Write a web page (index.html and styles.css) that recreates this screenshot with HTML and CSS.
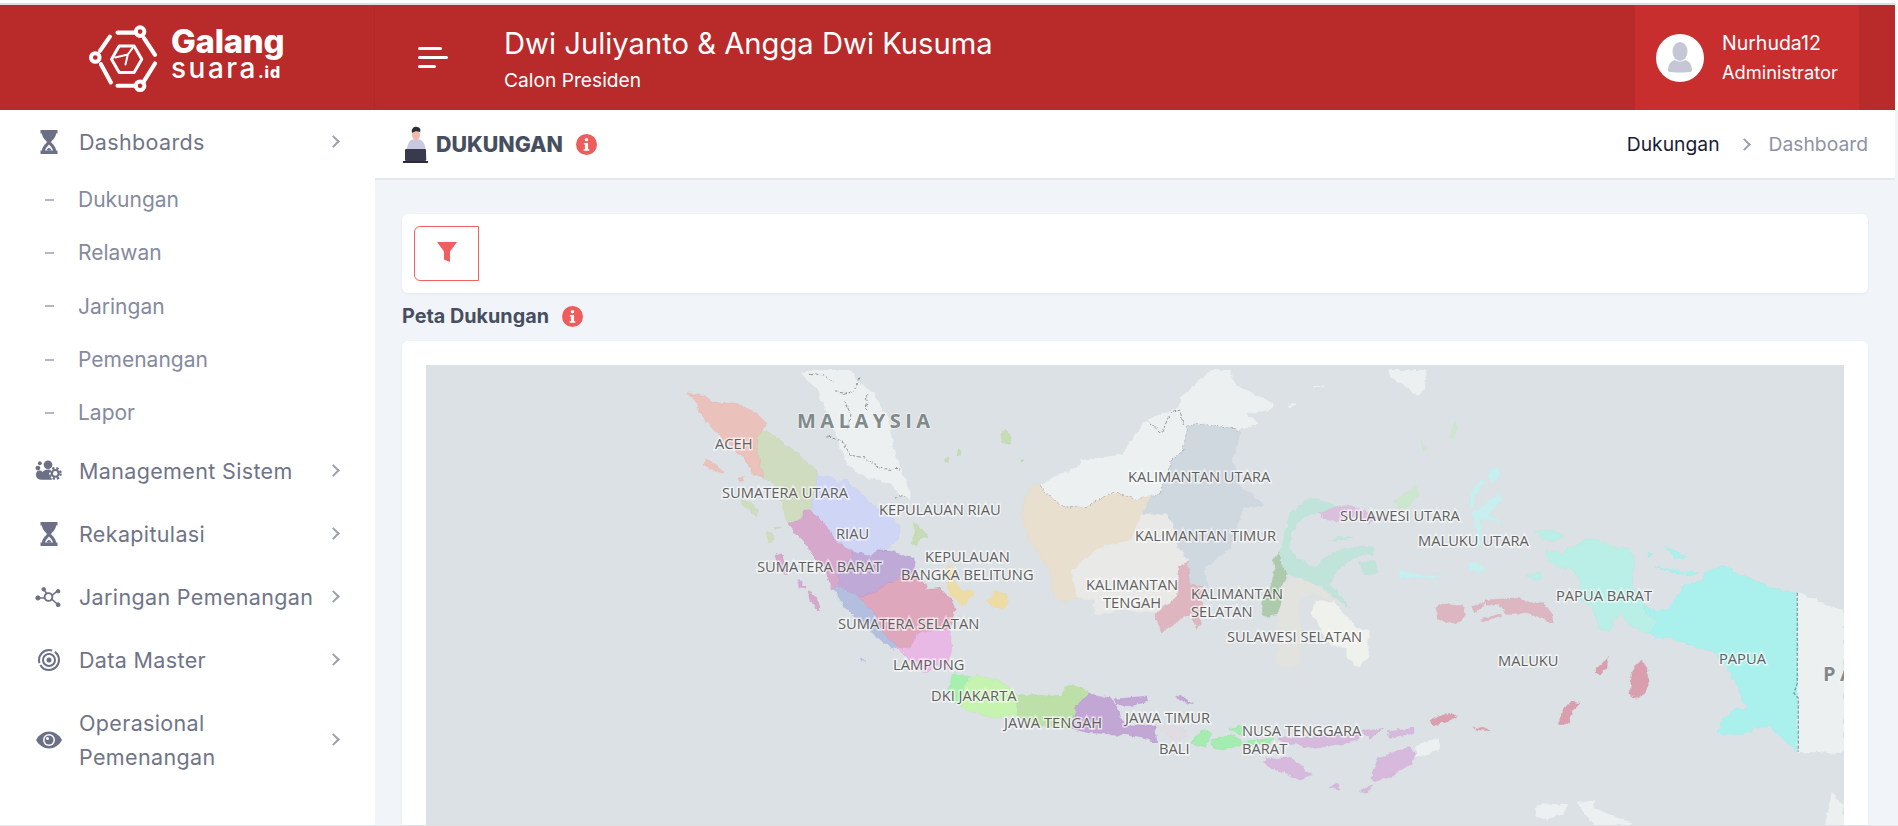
FILE: index.html
```html
<!DOCTYPE html>
<html lang="en">
<head>
    <meta charset="UTF-8">
    <meta name="viewport" content="width=device-width, initial-scale=1.0">
    <title>Dukungan | Galang Suara</title>
    <link rel="stylesheet" href="styles.css">
</head>
<body>
<div class="page">
    <header class="topbar">
        <div class="brand">
            <svg class="brand-logo" viewBox="50 40 220 220" fill="none" stroke="#fff" stroke-width="12.500" stroke-linecap="round" stroke-linejoin="round">
                <path d="M145 75h55M225 92l33 50M258 168l-36 58M200 235h-55M125 225L95 170M92 130l30-43"/>
                <circle cx="213" cy="72" r="13" stroke-width="12"/>
                <circle cx="213" cy="235" r="13" stroke-width="12"/>
                <circle cx="78" cy="150" r="13" stroke-width="12"/>
                <path d="M150 115h45l23 40-23 40h-45l-23-40z" stroke-width="9"/>
                <path d="M138 150l38-9 19-26M176 141l-7 30" stroke-width="6"/>
            </svg>
            <div class="brand-text">
                <span class="brand-top">Galang</span>
                <span class="brand-bottom">suara<b>.id</b></span>
            </div>
        </div>
        <div class="burger"><i class="b1"></i><i class="b2"></i><i class="b3"></i></div>
        <div class="candidate">
            <div class="candidate-name">Dwi Juliyanto &amp; Angga Dwi Kusuma</div>
            <div class="candidate-role">Calon Presiden</div>
        </div>
        <div class="user">
            <div class="avatar">
                <svg viewBox="0 0 48 48" width="48" height="48">
                    <ellipse cx="24" cy="17.500" rx="7.500" ry="9.500" fill="#c5c6d6"/>
                    <path d="M12 37c0-7 3-10 7-11 3 2 7 2 10 0 4 1 7 4 7 11 0 2-24 2-24 0z" fill="#c5c6d6"/>
                </svg>
            </div>
            <div class="user-info">
                <div class="user-name">Nurhuda12</div>
                <div class="user-role">Administrator</div>
            </div>
        </div>
    </header>

    <div class="layout">
        <nav class="sidebar">
            <a class="menu-item">
                <span class="menu-icon"><svg width="18" height="24" viewBox="0 0 18 24"><use href="#ic-hourglass"/></svg></span>
                <span class="menu-label">Dashboards</span>
                <span class="chev"></span>
            </a>
            <a class="sub-item"><i></i>Dukungan</a>
            <a class="sub-item"><i></i>Relawan</a>
            <a class="sub-item"><i></i>Jaringan</a>
            <a class="sub-item"><i></i>Pemenangan</a>
            <a class="sub-item"><i></i>Lapor</a>
            <a class="menu-item">
                <span class="menu-icon">
                    <svg width="28" height="21" viewBox="0 0 28 21" fill="#6c7086">
                        <circle cx="13.500" cy="4.500" r="4.500"/><circle cx="5" cy="3" r="2"/><circle cx="3" cy="8" r="2.500"/>
                        <path d="M1 15c0-3 1.500-4.500 4-4.500 1 0 2 .5 3 1.500 1-1.500 3-2.500 5.500-2.500 2 0 3 .5 4 1.500v9H6c-3 0-5-2-5-5z"/>
                        <circle cx="21" cy="13.500" r="6.500" fill="#fff"/>
                        <circle cx="21" cy="13.500" r="5.500" fill="none" stroke="#6c7086" stroke-width="2.500" stroke-dasharray="2.400 2"/>
                        <circle cx="21" cy="13.500" r="3.500" fill="none" stroke="#6c7086" stroke-width="2.200"/>
                    </svg>
                </span>
                <span class="menu-label">Management Sistem</span>
                <span class="chev"></span>
            </a>
            <a class="menu-item">
                <span class="menu-icon"><svg width="18" height="24" viewBox="0 0 18 24"><use href="#ic-hourglass"/></svg></span>
                <span class="menu-label">Rekapitulasi</span>
                <span class="chev"></span>
            </a>
            <a class="menu-item">
                <span class="menu-icon">
                    <svg width="28" height="22" viewBox="0 0 28 22" fill="#6c7086" stroke="#6c7086">
                        <path d="M3 12h9M9 3l5 7M17 13l7 6M18 9l5-4" stroke-width="1.600" fill="none"/>
                        <circle cx="14" cy="11" r="4" fill="#fff" stroke-width="2"/>
                        <circle cx="3" cy="12" r="2.200"/><circle cx="9" cy="3" r="1.800"/><circle cx="24" cy="19" r="2"/><circle cx="24" cy="5" r="1.800"/>
                    </svg>
                </span>
                <span class="menu-label">Jaringan Pemenangan</span>
                <span class="chev"></span>
            </a>
            <a class="menu-item">
                <span class="menu-icon">
                    <svg width="24" height="24" viewBox="0 0 24 24" fill="none" stroke="#6c7086">
                        <circle cx="12" cy="12" r="10" stroke-width="2" stroke-dasharray="26 2 22 3"/>
                        <circle cx="12" cy="12" r="6" stroke-width="2"/>
                        <circle cx="12" cy="12" r="2.500" fill="#6c7086" stroke="none"/>
                    </svg>
                </span>
                <span class="menu-label">Data Master</span>
                <span class="chev"></span>
            </a>
            <a class="menu-item">
                <span class="menu-icon">
                    <svg width="26" height="18" viewBox="0 0 26 18">
                        <path d="M0 9C3 3.500 8 0.500 13 0.500S23 3.500 26 9c-3 5.500-8 8.500-13 8.500S3 14.500 0 9z" fill="#6c7086"/>
                        <circle cx="13" cy="9" r="6" fill="#fff"/>
                        <circle cx="13" cy="9" r="4.500" fill="#6c7086"/>
                        <circle cx="11.500" cy="7.500" r="1.500" fill="#fff"/>
                    </svg>
                </span>
                <span class="menu-label">Operasional Pemenangan</span>
                <span class="chev"></span>
            </a>
        </nav>

        <main class="main">
            <div class="subheader">
                <div class="page-title">
                    <svg width="28" height="37" viewBox="0 0 28 37">
                        <path d="M4 34c0-9 1-17 5-20 2-1 8-1 10 0 5 3 5 12 6 20z" fill="#c9c8e0"/>
                        <ellipse cx="14" cy="9" rx="4" ry="5" fill="#f3b9a8"/>
                        <path d="M10 7c-1-4 2-7 5-6 3 0 4 3 3 5-3-1-5-1-8 1z" fill="#2b2b3a"/>
                        <rect x="3" y="23" width="21" height="12" rx="1" fill="#3a3a4f"/>
                        <rect x="1" y="35" width="25" height="2" fill="#2b2b3a"/>
                    </svg>
                    <h1>DUKUNGAN</h1>
                    <svg class="info" viewBox="0 0 20 20"><use href="#ic-info"/></svg>
                </div>
                <div class="crumbs">
                    <span class="crumb-on">Dukungan</span>
                    <span class="chev"></span>
                    <span class="crumb-off">Dashboard</span>
                </div>
            </div>

            <div class="content">
                <div class="card filter-card">
                    <button class="filter-btn" type="button">
                        <svg width="20" height="20" viewBox="0 0 20 20"><path d="M0 0h20l-7 9.500V20l-6-2.500V9.500z" fill="#f05f5f"/></svg>
                    </button>
                </div>
                <div class="section-title">
                    <h2>Peta Dukungan</h2>
                    <svg class="info" viewBox="0 0 20 20"><use href="#ic-info"/></svg>
                </div>
                <div class="card map-card">
                    <div class="map">
                        <svg class="map-svg" viewBox="426 365 1418 461" preserveAspectRatio="xMinYMin slice">
                            <defs>
                                <filter id="coast" x="-5%" y="-5%" width="110%" height="110%">
                                    <feTurbulence type="fractalNoise" baseFrequency="0.05" numOctaves="3" seed="7"/>
                                    <feDisplacementMap in="SourceGraphic" scale="16" xChannelSelector="R" yChannelSelector="G"/>
                                    <feGaussianBlur stdDeviation="0.600"/>
                                </filter>
                            </defs>
                            <!-- Sumatra, coordinates taken at 3x -->
                            <g filter="url(#coast)" transform="translate(660 370) scale(.3333)">
                                <path class="land" d="M420 10l30-10h120l30 40 40 30 50 80 10 80 40 110 15 55-35-25-30-30-70-15-60-45-20-50-30-80-40-90z"/>
                                <path class="border" d="M450 10l40 5 30 20M600 25l-15 35-30 10-30-5M620 70l0 50M550 90l20 40-5 50M500 200l50 15 20 40 50 10 40 30 60 5M705 385c10-10 30-10 40 5"/>
                                <path class="p-aceh" d="M95 75l35 0 35 25h65l60 30 30 30-15 18-15 27 5 45 15 70-30-5-30-55-40-35-40-35-40-45z"/>
                                <path class="p-aceh" d="M135 270l15 2 40 33-5 7-35-17-17-10zM85 65l12 5 2 8-12-4zM235 325l15-5 3 12-15 2z"/>
                                <path class="p-sumut" d="M305 178l35 17 60 45 50 45 18 15 2 40-15 55v25h-23v20l-47 22-15-42-8-35-22-45-30-18-15-72-5-45z"/>
                                <path class="p-sumut" d="M245 385l30 15 20 20-5 20-20-15-22-25zM325 480l15 10v20l-12 12-8-27zM340 470l22 2-12 4z"/>
                                <path class="p-riau" d="M468 315l42 5 20 15 35-5 10 25 25 10 30 35 50 30 40 40-5 40-35 25-25 5-25 20-50-15-50-30-30-45-45-45v-30l15-55z"/>
                                <path class="p-sumbar" d="M385 462l47-22v-20l28 5 40 45 30 45 50 30-2 15-48 50 10 40-25 10-15-50-60-80z"/>
                                <path class="p-sumbar" d="M345 555l20-7 10 42 15 20h-20l-20-30zM410 630l15 5 10 20-15-5zM445 665l20 15 15 30-5 12-25-32z"/>
                                <path class="p-jambi" d="M580 545l50 15 25-20h35l40 18 35 7 5 45-50 5-25 25-35 15-20 15-45 10-55-30-10-40 48-50z"/>
                                <path class="p-sumsel" d="M595 680l45-10 20-15 20-15h15l25-25h50l30 30-10 15 50-5 30 30 15 30-15 65-70 10-35 10-10 40-40-5-45-40-35-70-25-20z"/>
                                <path class="p-bengkulu" d="M520 655l20-5 55 30 15 20 25 20 35 70 45 40-15 8-40-28-60-50-50-55zM600 865l15 5 2 6-15-5z"/>
                                <path class="p-lampung" d="M710 830l45 5 10-40 35-10 70-10 5 65-15 60-30-15-30 20-30-5-30-40z"/>
                                <path class="p-babel" d="M865 590l20 10-5 25 15 30 40 10 10 5-20 20-10 15-25-10-20-25-10-40zM1000 665l40 7 5 23-15 20h-30l-10-20-12-5 17-10z"/>
                                <path class="p-kepri" d="M760 455l15 15 30 30-25 5-10 25-18-10 13-30zM1035 178l20 17-5 23-20 4-8-27zM892 237l8-2 2 20-8 3zM855 262l12 4-4 12-8-4zM1080 265l8 6-6 6z"/>
                            </g>
                            <!-- Kalimantan, Sulawesi -->
                            <g filter="url(#coast)" transform="translate(1000 370) scale(.3333)">
                                <path class="land" d="M120 345l120-60 5-15 115-15 80-105 100-40V85l50-45 40-40h60l20 45 110 55-10 20-70 10 35 30-55 20-100-15h-55l-15 75-30 25-30 80-10 30-70 15-70-25-80 45-70 5-60-50zM1165 0h115l-5 55-20 20-45-30-40-25zM860 110l25-12 8 6-25 10zM940 45h30v5h-30z"/>
                                <path class="border" d="M440 150l45 40 25-60 30-10 10 45M120 345l10 20 60 50 70-5 80-45 70 25 70-15M480 375l10-30 30-80 30-25 15-75h55l100 15"/>
                                <path class="p-kalbar" d="M105 340l15 5 10 20 60 50 70-5 80-45 70 25 40-12-25 52-30 80-95 20-85 70 15 80-40 20-30-20-10-80-20-30-45-60-20-90 15-50z"/>
                                <path class="p-kalteng" d="M215 600l85-70 95-20 30-80h75l20 30 15 70 30 45-30 15-5 90-70 50-90-10-85 15-5-45-50-10z"/>
                                <path class="p-kalsel" d="M535 590l30-15 5 65 40 10-10 90 5 20-15 15-20-45-85 55-23-50 68-55z"/>
                                <path class="p-kaltim" d="M565 165h55l100 15-5 35-20 55 25 80 75 55-65 5-40 120-80 70 15 50-55-10-5-65-30-45-15-70-20-30h-70l20-52 30-3 10-30 30-80 30-25z"/>
                                <path class="p-sulteng" d="M870 430l25-20 35-25 45 10 35 13-50 22h-30l-40 30-15 30-5 50 25 30 55 20 30-30 40-20 65-15 35 5v25h-35l-35 15-40 35-20 35 60 75-50-35-40-30-60-25-40-15-20-65 15-55zM1075 575h50l10 35-40 5zM990 510l30-10 40 5-30 8z"/>
                                <path class="p-gorontalo" d="M958 430l62-22h40l70 32-20 18-50-18-50 12-40-7z"/>
                                <path class="p-sulut" d="M1185 390l60-40 10 25-30 35-35 5zM1350 200l15-45 7 25-12 30zM1265 210l15 25-10 5z"/>
                                <path class="p-sulbar" d="M838 545l7 45 17 20-22 50 5 40-15 35-40 5-5-40 25-40 15-60-5-30z"/>
                                <path class="p-sulsel" d="M850 645l30-20h25l55 30 40 25-5 15-50-25-50 20 10 110-5 85-50 10-25-15 15-80-10-60 15-40zM905 900l7 50-7-2z"/>
                                <path class="p-sultra" d="M945 690l55 5 50 55 25 25 30 5v80l-30 35-35-35v-25l-50-10-30-55-25-35z"/>
                            </g>
                            <!-- Maluku, Papua -->
                            <g filter="url(#coast)" transform="translate(1400 450) scale(.3333)">
                                <path class="land" d="M1192 430l48 15 50 25 42 10v425l-32 10-30-10-78 3zM405 1075l25-15 70 5-5 25-55 20-30-10zM530 1060l50-10 5 25 65 25 50 25H585zM1275 1125l20-100 37 45v55z"/>
                                <path class="p-malut" d="M245 85l10 10-30 45v30h-20l10-45zM295 130l10 15-15 25-25 20 45 35-40-15h-30l5 80h-10l-10-70-10-30 45-30zM270 60l25-8 5 23-20 20-15-15zM205 340l20-5 35 23-20 9-30-5zM0 362l60 13h80l-40 7 10 33-15-30-55-5-40 5z"/>
                                <path class="p-pabar" d="M440 300l40 10 20-15 70-27 40 7 40 20h40l15 43-10 45 5 30 35 45v35l40 25-25 33-50-18-40-40-20 20-10 35-30-10-25-70-35-15 5-45-20-45-55-15-25-20zM405 245l45-5 40 15-20 15h-40zM378 378l42-13 10 20-25 7z"/>
                                <path class="p-papua" d="M910 370l55-23 75 33 70 32 80 18 2 475-27-25-55-50-50 5-20 15-90 3 20-43 30-30 40-5-25-60-30-55-35-50-70-20-60-25h-50l-20-17 25-33-40-25v-25l35 20 30-5 55-75 60-15zM785 288l30 7 20 15 25 10-35 7-15-22zM765 348l65 14 65 6-25 10-55-13zM745 310l12 5-12 7z"/>
                                <path class="p-maluku" d="M258 450l72-5 25-3 35 16h40l25 32 5 30-60-25-30-5h-50l-20-25-42 0zM105 475l20-12h40l25 8 10 19-20 25-30 5-35-15zM215 470l40-15-10 15-20 20zM245 510l35-15 25 2-25 11-30 9z"/>
                                <path class="p-aru" d="M725 630l15 20 5 50-10 30-25 15-20-10 5-55 10-30zM590 650l15-5 20-20-5 30-20 20-15-10zM510 755l30 5-20 20-15 40-30 5 15-45zM90 810l40-15 20-5 20 10-40 20-35 2zM220 835l30-3 20 10-30-2z"/>
                            </g>
                            <path class="border-png" transform="translate(1400 450) scale(.3333)" d="M1192 428v272l-10 30 13 15v160"/>
                            <!-- Jawa, Bali, Nusa Tenggara, this crop came 2.8x wide and 3x high -->
                            <g filter="url(#coast)" transform="translate(880 660) scale(.3571 .3333)">
                                <path class="land" d="M1500 260l68-30v40l-68 25z"/>
                                <path class="p-banten" d="M190 85l15-45 50 10-20 25-5 55-15 0z"/>
                                <path class="p-jabar" d="M235 75l35-30 70 20 40 35 5 65-55 10-100-30z"/>
                                <path class="p-jateng" d="M385 105h45l80 5 10-30 25-5 40 22v5l-35 38-15 65-105-10-45-30z"/>
                                <path class="p-jatim" d="M585 102l55 8 25 30 5 30 20 25h80l5 50-80-20-45-3-70-4-45-13 15-65zM655 118l90-10 5 17-50 12-35-2zM825 110l15-5 35 25h-20z"/>
                                <path class="p-bali" d="M775 198l55-3 30 30-30 20-30-20z"/>
                                <path class="p-ntb" d="M870 250l30-40 25 5v25l-15 20zM930 240l45-15h10l25 20 90-10-5 15-85 5-50 15-30-5zM980 205l35-8v33z"/>
                                <path class="p-ntt" d="M1110 235l230-10 5 10-45 15-80 15-90-20zM1350 215l60-10-40 30zM1420 215l75-10v15l-65 12zM1080 300l65-10 40 30 23 25-33 15-35-20-55-20zM1395 295l85-35 20 20-10 30-50 35-55 20-10-10zM1340 395l40-20-15 25zM1255 385l30-15v15z"/>
                            </g>
                            <text class="country" x="797" y="428">MALAYSIA</text>
                            <text class="country" x="1823" y="681">PA</text>
                            <text class="lbl" x="715" y="449">ACEH</text>
                            <text class="lbl" x="722" y="498">SUMATERA UTARA</text>
                            <text class="lbl" x="879" y="515">KEPULAUAN RIAU</text>
                            <text class="lbl" x="836" y="539">RIAU</text>
                            <text class="lbl" x="925" y="562">KEPULAUAN</text>
                            <text class="lbl" x="901" y="580">BANGKA BELITUNG</text>
                            <text class="lbl" x="757" y="572">SUMATERA BARAT</text>
                            <text class="lbl" x="838" y="629">SUMATERA SELATAN</text>
                            <text class="lbl" x="893" y="670">LAMPUNG</text>
                            <text class="lbl" x="1128" y="482">KALIMANTAN UTARA</text>
                            <text class="lbl" x="1135" y="541">KALIMANTAN TIMUR</text>
                            <text class="lbl" x="1086" y="590">KALIMANTAN</text>
                            <text class="lbl" x="1103" y="608">TENGAH</text>
                            <text class="lbl" x="1191" y="599">KALIMANTAN</text>
                            <text class="lbl" x="1191" y="617">SELATAN</text>
                            <text class="lbl" x="1227" y="642">SULAWESI SELATAN</text>
                            <text class="lbl" x="1340" y="521">SULAWESI UTARA</text>
                            <text class="lbl" x="1418" y="546">MALUKU UTARA</text>
                            <text class="lbl" x="1556" y="601">PAPUA BARAT</text>
                            <text class="lbl" x="1498" y="666">MALUKU</text>
                            <text class="lbl" x="1719" y="664">PAPUA</text>
                            <text class="lbl" x="931" y="701">DKI JAKARTA</text>
                            <text class="lbl" x="1004" y="728">JAWA TENGAH</text>
                            <text class="lbl" x="1125" y="723">JAWA TIMUR</text>
                            <text class="lbl" x="1159" y="754">BALI</text>
                            <text class="lbl" x="1242" y="736">NUSA TENGGARA</text>
                            <text class="lbl" x="1242" y="754">BARAT</text>
                        </svg>
                    </div>
                </div>
            </div>
        </main>
    </div>
</div>

<!-- shared icons -->
<svg class="defs" width="0" height="0">
    <defs>
        <g id="ic-hourglass">
            <path fill="#6c7086" d="M0.500 0h17v3.500H16c0 3.500-3 6-5 8.500 2 2.500 5 5 5 8.500h1.500V24H0.500v-3.500H2c0-3.500 3-6 5-8.500C5 9.500 2 7 2 3.500H0.500z"/>
            <path fill="#fff" d="M9 14.500c1.500 1.500 3.500 3.500 4 6H5c0.500-2.500 2.500-4.500 4-6z" opacity=".95"/>
            <path fill="#6c7086" d="M9 18c1 0 2 1 2.500 2.500h-5C7 19 8 18 9 18z"/>
        </g>
        <g id="ic-info">
            <circle cx="10" cy="10" r="10" fill="#ee5c5c"/>
            <rect x="8.500" y="4" width="3" height="3" rx="1" fill="#fff"/>
            <path d="M7.500 8.500h4v6h1.200V16H7.300v-1.500h1.200V10H7.500z" fill="#fff"/>
        </g>
    </defs>
</svg>
</body>
</html>
```

FILE: styles.css
```css
* {
    margin: 0;
    padding: 0;
    box-sizing: border-box;
}

html, body {
    height: 100%;
    overflow: hidden;
}

body {
    background: #fff;
    font-family: 'Inter', 'Roboto', sans-serif;
}

.page {
    height: 826px;
    display: flex;
    flex-direction: column;
    padding-top: 3px;
    border-bottom: 1px solid #e6e8ec;
}

/* Top bar */
.topbar {
    height: 107px;
    margin-right: 3px;
    border-top: 2px solid #dcdfe1;
    background: #b92a2a;
    display: flex;
    align-items: center;
    color: #fff;
    flex-shrink: 0;
}

.brand {
    width: 375px;
    height: 100%;
    padding-left: 86px;
    display: flex;
    align-items: center;
    gap: 12px;
    border-right: 1px solid #b02828;
}

.brand-logo {
    width: 73px;
    height: 73px;
}

.brand-text {
    display: flex;
    flex-direction: column;
    margin-top: -5px;
}

.brand-top {
    font-size: 33px;
    font-weight: 800;
    line-height: 30px;
    letter-spacing: -0.300px;
}

.brand-bottom {
    font-size: 28px;
    font-weight: 500;
    line-height: 25px;
    letter-spacing: 2.500px;
}

.brand-bottom b {
    font-size: 16px;
    font-weight: 800;
    letter-spacing: 1px;
}

.burger {
    margin-left: 43px;
    width: 30px;
    display: flex;
    flex-direction: column;
    gap: 6px;
}

.burger i {
    display: block;
    height: 3px;
    background: #fff;
    border-radius: 2px;
}

.b1 { width: 24px; }
.b2 { width: 30px; }
.b3 { width: 18px; }

.candidate {
    margin-left: 56px;
    flex: 1;
}

.candidate-name {
    font-size: 29.200px;
    line-height: 36px;
    margin-top: 2px;
    margin-bottom: 6px;
}

.candidate-role {
    font-size: 19.200px;
    line-height: 24px;
}

.user {
    width: 224px;
    height: 100%;
    margin-right: 36px;
    padding-left: 21px;
    background: #c82e2e;
    display: flex;
    align-items: center;
    gap: 18px;
}

.avatar {
    width: 48px;
    height: 48px;
    border-radius: 50%;
    background: #fff;
    overflow: hidden;
}

.user-info {
    line-height: 29px;
}

.user-name { font-size: 19.500px; }
.user-role { font-size: 18.300px; }

/* Layout */
.layout {
    flex: 1;
    display: flex;
    min-height: 0;
}

.sidebar {
    width: 375px;
    flex-shrink: 0;
    background: #fff;
}

.menu-item {
    display: flex;
    align-items: center;
    padding: 14.500px 0;
    color: #6f7488;
    font-size: 21.500px;
    letter-spacing: 0.350px;
    line-height: 34px;
}

.menu-icon {
    width: 79px;
    padding-left: 35px;
    height: 28px;
    display: flex;
    align-items: center;
    justify-content: center;
    padding-right: 17px;
    flex-shrink: 0;
}

.menu-label {
    width: 250px;
}

.chev {
    display: inline-block;
    width: 9px;
    height: 9px;
    border-top: 2px solid #9aa1ac;
    border-right: 2px solid #9aa1ac;
    transform: rotate(45deg);
}

.sub-item {
    display: flex;
    align-items: center;
    height: 53.300px;
    padding-left: 45px;
    color: #858a9e;
    font-size: 21px;
}

.sub-item i {
    display: block;
    width: 9px;
    height: 2px;
    margin-right: 24px;
    background: #b5b8c4;
}

/* Main column */
.main {
    flex: 1;
    min-width: 0;
    background: #f1f5f9;
    display: flex;
    flex-direction: column;
}

.subheader {
    height: 70px;
    margin-right: 3px;
    padding: 0 27px 0 27px;
    background: #fff;
    border-bottom: 2px solid #e4e8ec;
    display: flex;
    align-items: center;
    justify-content: space-between;
    flex-shrink: 0;
}

.page-title {
    display: flex;
    align-items: center;
}

.page-title h1 {
    margin-left: 6px;
    font-size: 21.400px;
    font-weight: 800;
    color: #464e5f;
}

.info {
    width: 21px;
    height: 21px;
    margin-left: 13px;
}

.crumbs {
    display: flex;
    align-items: center;
    gap: 20px;
    font-size: 19.300px;
}

.crumb-on { color: #181c32; }
.crumb-off { color: #8d93a5; }

.content {
    flex: 1;
    min-height: 0;
    padding: 34px 30px 0 27px;
    display: flex;
    flex-direction: column;
}

.card {
    background: #fff;
    border-radius: 6px;
    box-shadow: 0 1px 3px rgba(0, 0, 0, 0.06);
}

.filter-card {
    padding: 12px;
    height: 79px;
    flex-shrink: 0;
}

.filter-btn {
    display: flex;
    align-items: center;
    justify-content: center;
    width: 65px;
    height: 55px;
    background: #fff;
    border: 1px solid #f26060;
    border-radius: 6px 0 0 6px;
    padding-bottom: 4px;
}

.section-title {
    height: 48px;
    padding-bottom: 2px;
    display: flex;
    align-items: center;
    flex-shrink: 0;
}

.section-title h2 {
    font-size: 19.800px;
    font-weight: 700;
    color: #464e5f;
}

.map-card {
    flex: 1;
    min-height: 0;
    padding: 24px 24px 0;
    border-radius: 6px 6px 0 0;
}

.map {
    height: 100%;
    background: #dbe1e4;
    overflow: hidden;
}

.map-svg {
    display: block;
    width: 100%;
    height: 100%;
}

.defs {
    position: absolute;
}

/* Map */
.land { fill: #ecf0f1; }

.border, .border-png {
    fill: none;
    stroke: #8d9596;
    stroke-width: 3;
    stroke-dasharray: 10 5;
}

.border-png {
    stroke: #6fa5a6;
    stroke-width: 4;
}

.lbl {
    font-family: 'Open Sans', sans-serif;
    font-size: 14.700px;
    fill: #5f5f5f;
    stroke: rgba(255, 255, 255, 0.65);
    stroke-width: 3px;
    paint-order: stroke;
}

.country {
    font-family: 'Open Sans', sans-serif;
    font-size: 20px;
    font-weight: 700;
    letter-spacing: 4.500px;
    fill: #808a8a;
    stroke: rgba(255, 255, 255, 0.5);
    stroke-width: 2px;
    paint-order: stroke;
}

.p-aceh { fill: #ebc1bb; stroke: #e5a8a0; }
.p-sumut { fill: #cfdcc0; stroke: #bfd2aa; }
.p-riau { fill: #cfd5f5; stroke: #bcc4f5; }
.p-sumbar { fill: #d6a8cc; stroke: #c98cbe; }
.p-jambi { fill: #bfa9d6; stroke: #a98ccb; }
.p-sumsel { fill: #dea7bb; stroke: #d17fa0; }
.p-bengkulu { fill: #b4bede; stroke: #9dacd8; }
.p-lampung { fill: #e9b9e6; stroke: #e29ade; }
.p-babel { fill: #eedca5; stroke: #ebd68f; }
.p-kepri { fill: #c5dcb4; stroke: #b5d29e; }
.p-kalbar { fill: #e8dfcf; stroke: #e3d8c4; }
.p-kalteng { fill: #e9e9e7; stroke: #e9e9e7; }
.p-kalsel { fill: #dfb5c0; stroke: #d9a6b4; }
.p-kaltim { fill: #d0d8df; stroke: #c9d2da; }
.p-sulteng { fill: #c0e4da; stroke: #b2e0d3; }
.p-gorontalo { fill: #dabfde; stroke: #d1b0d7; }
.p-sulut { fill: #cde7cf; stroke: #c0e3c3; }
.p-sulbar { fill: #adcbac; stroke: #9bc19a; }
.p-sulsel { fill: #e2e2de; stroke: #e2e2de; }
.p-sultra { fill: #eff1ec; stroke: #eff1ec; }
.p-malut { fill: #c8eff0; stroke: #b8eeef; }
.p-pabar { fill: #b9efe6; stroke: #a5ecdf; }
.p-papua { fill: #aaf1ed; stroke: #8eeee8; }
.p-maluku { fill: #dcb6c0; stroke: #d5a4b1; }
.p-aru { fill: #d99fae; stroke: #d28a9c; }
.p-banten { fill: #a7efaf; stroke: #8eeb98; }
.p-jabar { fill: #c6f4b0; stroke: #a8f08a; }
.p-jateng { fill: #bde0a8; stroke: #a6d68b; }
.p-jatim { fill: #c2a6d4; stroke: #b08fca; }
.p-bali { fill: #e1dce2; stroke: #d8d0da; }
.p-ntb { fill: #a5ecb0; stroke: #80e690; }
.p-ntt { fill: #d6b9dc; stroke: #c8a4d1; }
```
